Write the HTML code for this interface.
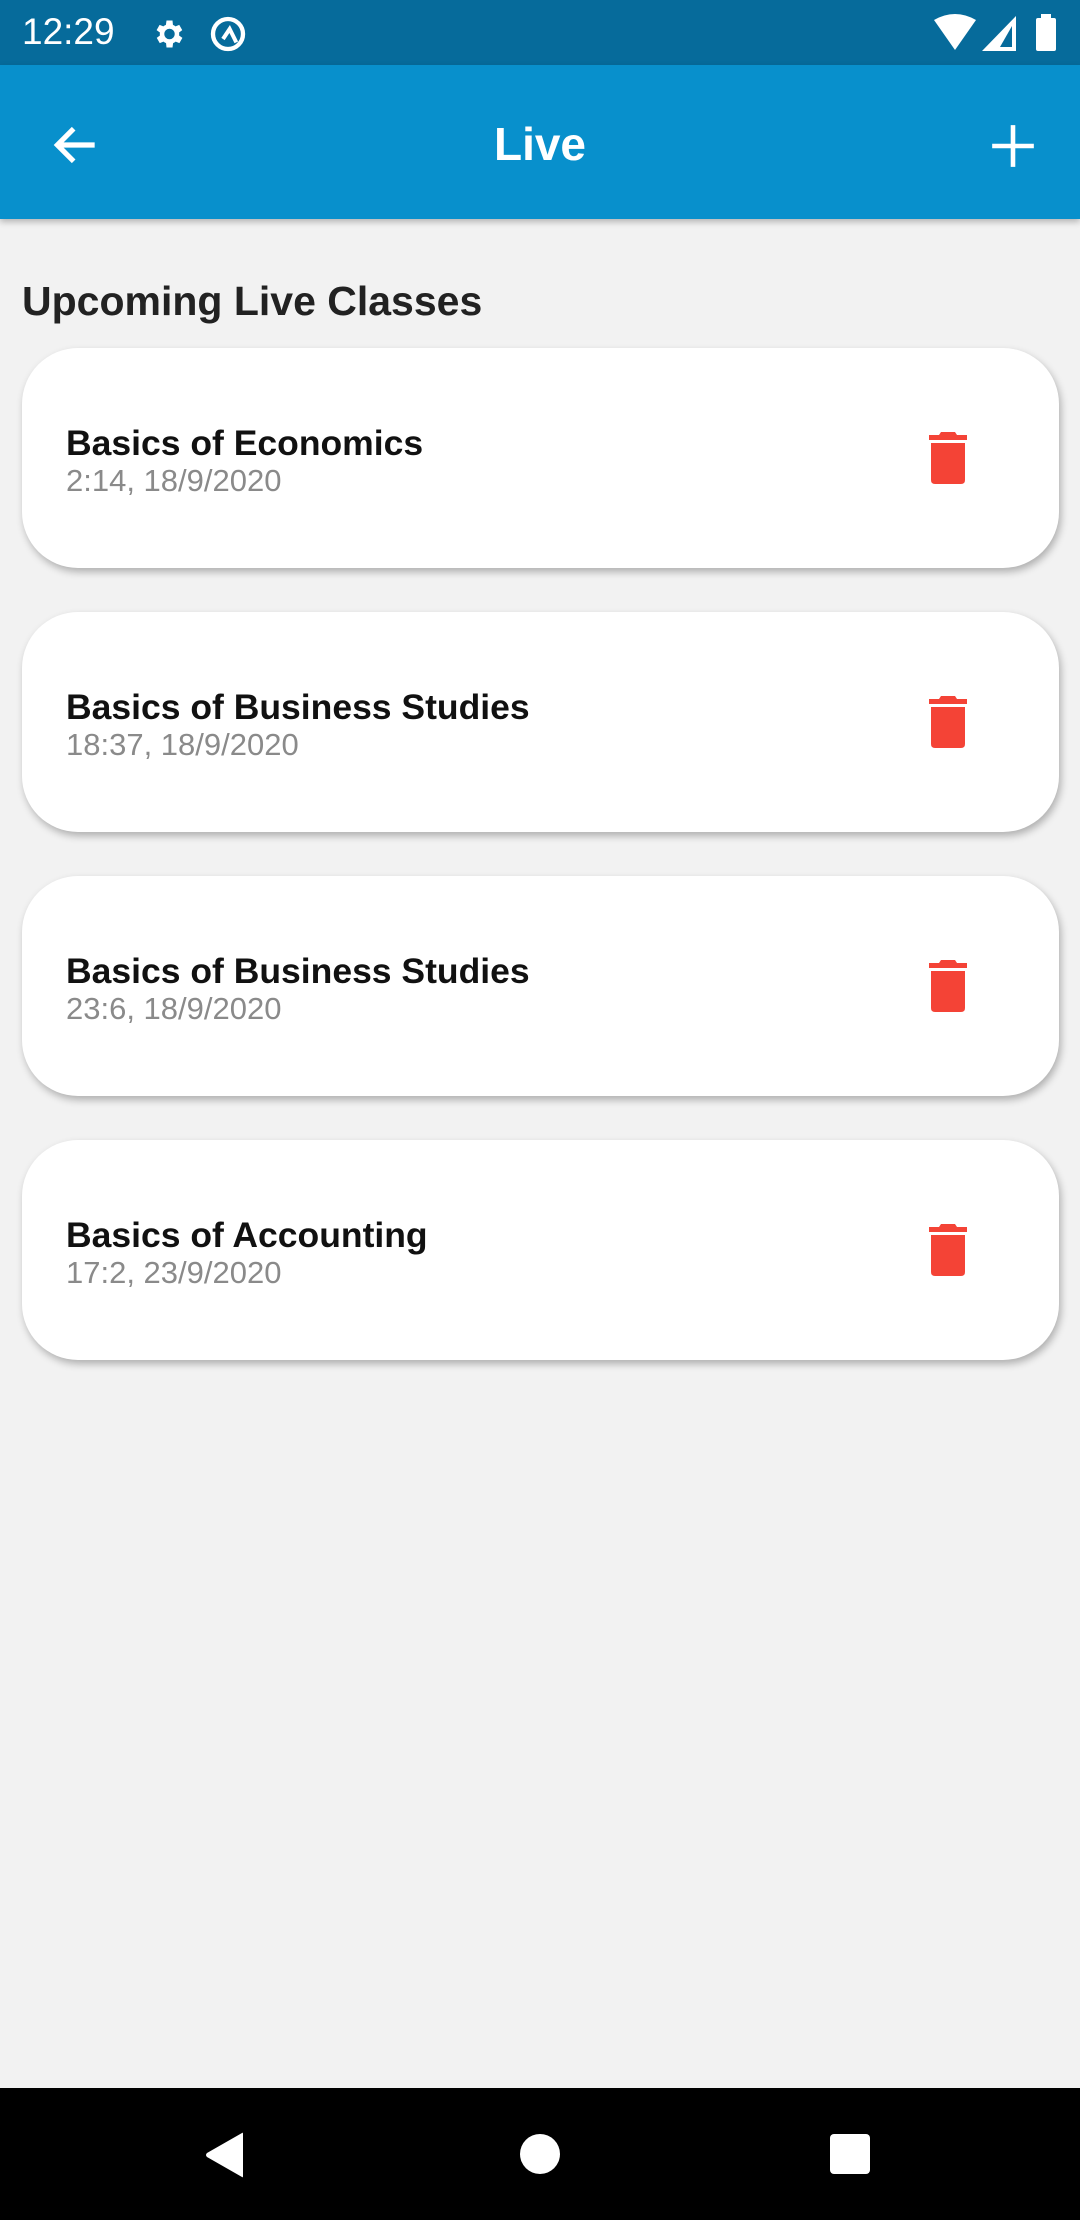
<!DOCTYPE html>
<html><head><meta charset="utf-8"><style>
*{margin:0;padding:0;box-sizing:border-box}
body{width:1080px;height:2220px;background:#f2f2f2;font-family:"Liberation Sans",Roboto,sans-serif;position:relative;overflow:hidden}
.status{position:absolute;top:0;left:0;width:1080px;height:65px;background:#066b9b;color:#fff}
.bar{position:absolute;top:65px;left:0;width:1080px;height:154px;background:#0890cc;box-shadow:0 3px 6px rgba(0,0,0,.25)}
.h{position:absolute;left:22px;top:278px;font-size:41px;font-weight:bold;color:#222}
.card{position:absolute;left:22px;width:1037px;height:220px;background:#fff;border-radius:56px;box-shadow:2px 4px 8px rgba(0,0,0,.28)}
.t{position:absolute;left:44px;top:75px;font-size:35.5px;font-weight:bold;color:#111}
.d{position:absolute;left:44px;top:115px;font-size:31px;color:#8a8a8a}
.tr{position:absolute;left:906px;top:84px}
.nav{position:absolute;top:2088px;left:0;width:1080px;height:132px;background:#000}
</style></head><body>
<div class="status">
<div style="position:absolute;left:22px;top:11px;font-size:37px">12:29</div>
<svg style="position:absolute;left:150px;top:16px" width="36" height="36" viewBox="0 0 24 24"><path fill="#fff" d="M19.4 13a7.5 7.5 0 0 0 0-2l2.1-1.6-2-3.5-2.5 1a7 7 0 0 0-1.7-1L15 3h-4l-.4 2.9a7 7 0 0 0-1.7 1l-2.5-1-2 3.5L6.6 11a7.5 7.5 0 0 0 0 2l-2.1 1.6 2 3.5 2.5-1a7 7 0 0 0 1.7 1L11 21h4l.4-2.9a7 7 0 0 0 1.7-1l2.5 1 2-3.5zM13 15.5a3.5 3.5 0 1 1 0-7 3.5 3.5 0 0 1 0 7z"/></svg>
<svg style="position:absolute;left:208px;top:14px" width="40" height="40" viewBox="0 0 24 24"><circle cx="12" cy="12" r="9" fill="none" stroke="#fff" stroke-width="2.6"/><path d="M9 15l4-6 4 8" fill="none" stroke="#fff" stroke-width="2.4"/></svg>
<svg style="position:absolute;left:934px;top:14px" width="42" height="38" viewBox="0 0 42 38"><path fill="#fff" d="M0 6Q21-6 42 6L21 36z"/></svg>
<svg style="position:absolute;left:982px;top:16px" width="34" height="35" viewBox="0 0 34 35"><path fill="#fff" d="M34 0V35H0z"/><path fill="#066b9b" d="M30 10V31H18z"/></svg>
<div style="position:absolute;left:1036px;top:18px;width:20px;height:33px;background:#fff;border-radius:2px"></div>
<div style="position:absolute;left:1041px;top:14px;width:10px;height:5px;background:#fff"></div>
</div>
<div class="bar">
<svg style="position:absolute;left:48px;top:52px" width="56" height="56" viewBox="0 0 24 24"><path d="M20 12H5M11 5l-7 7 7 7" fill="none" stroke="#fff" stroke-width="2.2"/></svg>
<div style="position:absolute;left:0;width:1080px;top:52px;text-align:center;color:#fff;font-size:46px;font-weight:bold">Live</div>
<svg style="position:absolute;left:988px;top:56px" width="50" height="50" viewBox="0 0 24 24"><path d="M12 2v20M2 12h20" stroke="#fff" stroke-width="2.2"/></svg>
</div>
<div class="h">Upcoming Live Classes</div>

<div class="card" style="top:348px"><div class="t">Basics of Economics</div><div class="d">2:14, 18/9/2020</div>
<svg class="tr" width="40" height="52" viewBox="0 0 40 52"><path fill="#f44336" d="M13 0h14l2 3h10v5H1V3h10zM3 11h34v37q0 4-4 4H7q-4 0-4-4z"/></svg></div>
<div class="card" style="top:612px"><div class="t">Basics of Business Studies</div><div class="d">18:37, 18/9/2020</div>
<svg class="tr" width="40" height="52" viewBox="0 0 40 52"><path fill="#f44336" d="M13 0h14l2 3h10v5H1V3h10zM3 11h34v37q0 4-4 4H7q-4 0-4-4z"/></svg></div>
<div class="card" style="top:876px"><div class="t">Basics of Business Studies</div><div class="d">23:6, 18/9/2020</div>
<svg class="tr" width="40" height="52" viewBox="0 0 40 52"><path fill="#f44336" d="M13 0h14l2 3h10v5H1V3h10zM3 11h34v37q0 4-4 4H7q-4 0-4-4z"/></svg></div>
<div class="card" style="top:1140px"><div class="t">Basics of Accounting</div><div class="d">17:2, 23/9/2020</div>
<svg class="tr" width="40" height="52" viewBox="0 0 40 52"><path fill="#f44336" d="M13 0h14l2 3h10v5H1V3h10zM3 11h34v37q0 4-4 4H7q-4 0-4-4z"/></svg></div>

<div class="nav">
<svg style="position:absolute;left:205px;top:44px" width="40" height="46" viewBox="0 0 40 46"><path fill="#fff" d="M37 1Q38 0 38 2V44Q38 46 37 45L2 25Q0 23 2 21z"/></svg>
<div style="position:absolute;left:520px;top:46px;width:40px;height:40px;border-radius:50%;background:#fff"></div>
<div style="position:absolute;left:830px;top:46px;width:40px;height:40px;border-radius:4px;background:#fff"></div>
</div>
</body></html>
